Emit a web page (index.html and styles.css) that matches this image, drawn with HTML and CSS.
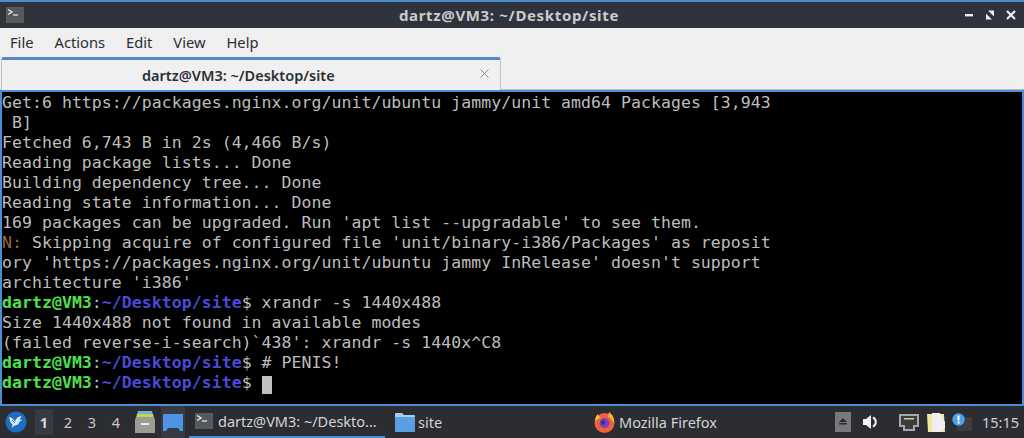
FILE: index.html
```html
<!DOCTYPE html>
<html lang="en">
<head>
<meta charset="utf-8">
<title>dartz@VM3: ~/Desktop/site</title>
<link rel="stylesheet" href="styles.css">
</head>
<body>
<div class="window">
  <header class="titlebar">
    <span class="app-icon"><svg width="18" height="16" viewBox="0 0 18 16"><rect width="18" height="16" fill="#555a5c"/><path d="M2 2.500l4 2.500-4 2.500" fill="none" stroke="#eee" stroke-width="1.400"/><path d="M7 8h5" stroke="#ddd" stroke-width="1.400"/></svg></span>
    <div class="title">dartz@VM3: ~/Desktop/site</div>
    <div class="controls">
      <svg width="10" height="10" viewBox="0 0 10 10"><rect x="1" y="4" width="8" height="2.400" fill="#eceff1"/></svg>
      <svg width="10" height="10" viewBox="0 0 10 10"><path d="M1 9.500V3.500L7 9.500zM9 .5v6L3 .5z" fill="#eceff1"/></svg>
      <svg width="10" height="10" viewBox="0 0 10 10"><path d="M1 1l8 8M9 1l-8 8" stroke="#eceff1" stroke-width="2.200"/></svg>
    </div>
  </header>
  <nav class="menubar">
    <span>File</span><span>Actions</span><span>Edit</span><span>View</span><span>Help</span>
  </nav>
  <div class="tabbar">
    <div class="tab">
      <span class="tab-label">dartz@VM3: ~/Desktop/site</span>
      <svg class="tab-close" width="9" height="9" viewBox="0 0 9 9"><path d="M.5.5l8 8M8.500.5l-8 8" stroke="#8d8d8d" stroke-width="1"/></svg>
    </div>
  </div>
  <pre class="terminal">Get:6 https://packages.nginx.org/unit/ubuntu jammy/unit amd64 Packages [3,943
 B]
Fetched 6,743 B in 2s (4,466 B/s)
Reading package lists... Done
Building dependency tree... Done
Reading state information... Done
169 packages can be upgraded. Run 'apt list --upgradable' to see them.
<span class="note">N:</span> Skipping acquire of configured file 'unit/binary-i386/Packages' as reposit
ory 'https://packages.nginx.org/unit/ubuntu jammy InRelease' doesn't support
architecture 'i386'
<b class="user">dartz@VM3</b>:<b class="path">~/Desktop/site</b>$ xrandr -s 1440x488
Size 1440x488 not found in available modes
(failed reverse-i-search)`438': xrandr -s 1440x^C8
<b class="user">dartz@VM3</b>:<b class="path">~/Desktop/site</b>$ # PENIS!
<b class="user">dartz@VM3</b>:<b class="path">~/Desktop/site</b>$ <span class="cursor"> </span></pre>
</div>
<footer class="panel">
  <span class="start"><svg width="22" height="22" viewBox="0 0 22 22"><circle cx="11" cy="11" r="10.500" fill="#1c6fc0"/><path d="M4 6c2.500.5 4.500 2 6 4.500 1-3 3-5 6.500-5.500-.5 1.500-1 2.500-2 3.500l3 .5-3 1.500c-.5 2.500-2.500 4-5 4l-2.500 2.500.5-3.500C5.500 12.500 5 9.500 4 6z" fill="#dcebf7"/><path d="M7 9l3 3" stroke="#1c6fc0" stroke-width="1"/></svg></span>
  <div class="pager">
    <span class="desk active">1</span><span class="desk">2</span><span class="desk">3</span><span class="desk">4</span>
  </div>
  <span class="launcher files"><svg width="20" height="24" viewBox="0 0 20 24"><path d="M3 1h14l1 4H2z" fill="#6fb4dc"/><path d="M2 4h16l1 4H1z" fill="#c9d24e"/><path d="M1 7h18l1 3v13H0V10z" fill="#9c9c92"/><rect x="6" y="13" width="8" height="2" fill="#eee"/></svg></span>
  <span class="launcher current"><svg width="20" height="17" viewBox="0 0 20 17"><path d="M0 0h20v17h-3l-2-3H5l-2 3H0z" fill="#4f94e4"/></svg></span>
  <div class="task active-task">
    <svg width="18" height="16" viewBox="0 0 18 16"><rect width="18" height="16" fill="#555a5c"/><path d="M2 2.500l4 2.500-4 2.500" fill="none" stroke="#eee" stroke-width="1.400"/><path d="M7 8h5" stroke="#ddd" stroke-width="1.400"/></svg>
    <span>dartz@VM3: ~/Deskto...</span>
  </div>
  <div class="task task-site">
    <svg width="20" height="19" viewBox="0 0 20 19"><path d="M0 1a1 1 0 0 1 1-1h6l2 2h10a1 1 0 0 1 1 1v2H0z" fill="#a7cdf0"/><path d="M0 4h20v14a1 1 0 0 1-1 1H1a1 1 0 0 1-1-1z" fill="#5a9fe0"/></svg>
    <span>site</span>
  </div>
  <div class="task task-firefox">
    <svg width="21" height="22" viewBox="0 0 21 22"><circle cx="10.500" cy="12" r="10" fill="#f0603a"/><path d="M15 1c4 3 6 7 5 12-1-3-3-6-6-7z" fill="#ffb02e"/><path d="M1 10c0-3 1-5 3-7 0 2 1 3 3 3z" fill="#ffbc3a"/><circle cx="10.500" cy="12" r="5" fill="#7b3fc0"/><circle cx="9" cy="11.500" r="2.200" fill="#3d2a90"/></svg>
    <span>Mozilla Firefox</span>
  </div>
  <div class="tray">
    <span class="eject"><svg width="16" height="20" viewBox="0 0 16 20"><rect width="16" height="20" fill="#77797b"/><path d="M8 6l4 4H4zM4 11h8v1.500H4z" fill="#2a2c30"/></svg></span>
    <svg class="vol" width="17" height="16" viewBox="0 0 17 16"><path d="M0 5h3l5-4v14l-5-4H0z" fill="#f2f2f2"/><path d="M10 3.500a5 5 0 0 1 0 9" fill="none" stroke="#f2f2f2" stroke-width="2"/></svg>
    <svg class="net" width="20" height="17" viewBox="0 0 20 17"><path d="M1 1h18v11h-4v4H5v-4H1z" fill="#3a3d3f" stroke="#a5a7a8" stroke-width="2"/><path d="M5 4h10v1.500H5z" fill="#e0d080"/></svg>
    <svg class="clip" width="20" height="21" viewBox="0 0 20 21"><path d="M1 2h17l1 18H2z" fill="#f3e7a0"/><path d="M6 1h8l5 9v6l-5 4H6z" fill="#f1eef2"/></svg>
    <span class="update"><svg width="20" height="18" viewBox="0 0 20 18"><rect x="5" y="4" width="15" height="14" fill="#3c3e41"/><circle cx="6.500" cy="6.500" r="6.200" fill="#4fa0e6"/><rect x="5.500" y="2.500" width="2" height="5" fill="#fff"/><rect x="5.500" y="8.500" width="2" height="2" fill="#fff"/></svg></span>
    <span class="clock">15:15</span>
  </div>
</footer>
</body>
</html>
```

FILE: styles.css
```css
* { box-sizing: border-box; }
html, body { margin: 0; padding: 0; }
body {
  width: 1024px;
  height: 438px;
  overflow: hidden;
  background: #2b2d33;
  font-family: "Noto Sans", "Open Sans", sans-serif;
  display: flex;
  flex-direction: column;
}
.window { height: 406px; display: flex; flex-direction: column; }
.titlebar {
  height: 28px;
  flex: none;
  border-top: 2px solid #4d8dd3;
  background: #2f343c;
  display: flex;
  align-items: center;
  padding: 0 8px 0 6px;
  position: relative;
}
.app-icon { display: flex; }
.title {
  position: absolute;
  left: 0;
  right: 6px;
  text-align: center;
  color: #c9cbce;
  font-size: 15px;
  font-weight: 700;
  letter-spacing: .65px;
}
.controls { margin-left: auto; display: flex; gap: 11px; position: relative; }
.menubar {
  height: 29px;
  flex: none;
  background: #efefef;
  display: flex;
  align-items: center;
  gap: 21px;
  padding: 0 10px 1px;
  font-size: 14.700px;
  color: #2b2e33;
}
.tabbar {
  height: 33px;
  flex: none;
  background: #efefef;
  border-bottom: 1px solid #bdbcb8;
  display: flex;
  padding-left: 1px;
}
.tab {
  width: 500px;
  height: 33px;
  border: 1px solid #c4c4c2;
  border-top: 3px solid #5288c9;
  border-bottom: 0;
  border-radius: 3px 3px 0 0;
  background: #f0f0f0;
  display: flex;
  align-items: center;
  position: relative;
}
.tab-label {
  margin-left: 140px;
  font-size: 14.500px;
  font-weight: 600;
  color: #2b2e33;
}
.tab-close { position: absolute; right: 11px; top: 9px; }
.terminal {
  flex: 1;
  margin: 0;
  background: #000;
  border: 2px solid #4d8dd3;
  color: #bdbdbd;
  font-family: "DejaVu Sans Mono", monospace;
  font-size: 16.500px;
  letter-spacing: .05px;
  line-height: 20px;
  padding: 1px 0 0;
  overflow: hidden;
  white-space: pre;
}
.terminal .user { color: #4fe04f; font-weight: 700; }
.terminal .path { color: #4a4ad8; font-weight: 700; }
.note { color: #9a6a3a; }
.cursor { display: inline-block; width: 10px; height: 18px; background: #c0c0c0; vertical-align: -3px; }
.panel {
  flex: 1;
  background: #2b2d33;
  display: flex;
  align-items: center;
  color: #d4d4d4;
  font-size: 14.500px;
}
.start { display: flex; margin-left: 5px; width: 30px; }
.pager { display: flex; gap: 6px; }
.desk { width: 18px; height: 26px; display: flex; align-items: center; justify-content: center; color: #c8c8c8; }
.desk.active { background: #373a40; font-weight: 700; color: #d8d8d8; }
.launcher { display: flex; width: 27px; height: 32px; align-items: center; justify-content: center; }
.launcher.files { margin-left: 6px; }
.launcher.current { background: #363a42; margin-left: 3px; width: 24px; }
.task { display: flex; align-items: center; gap: 5px; height: 32px; }
.active-task { width: 196px; padding-left: 6px; border-bottom: 2px solid #4d8dd3; margin-left: 4px; white-space: nowrap; }
.task-site { margin-left: 10px; width: 199px; gap: 3px; }
.task-firefox { width: 220px; gap: 4px; }
.tray { margin-left: auto; display: flex; align-items: center; padding-right: 5px; }
.eject { display: flex; margin-right: 12px; }
.vol { margin-right: 19px; }
.net { margin-right: 7px; }
.clip { margin-right: 6px; }
.update { display: flex; margin-right: 10px; }
.clock { font-size: 14.500px; color: #cfcfcf; }
```
